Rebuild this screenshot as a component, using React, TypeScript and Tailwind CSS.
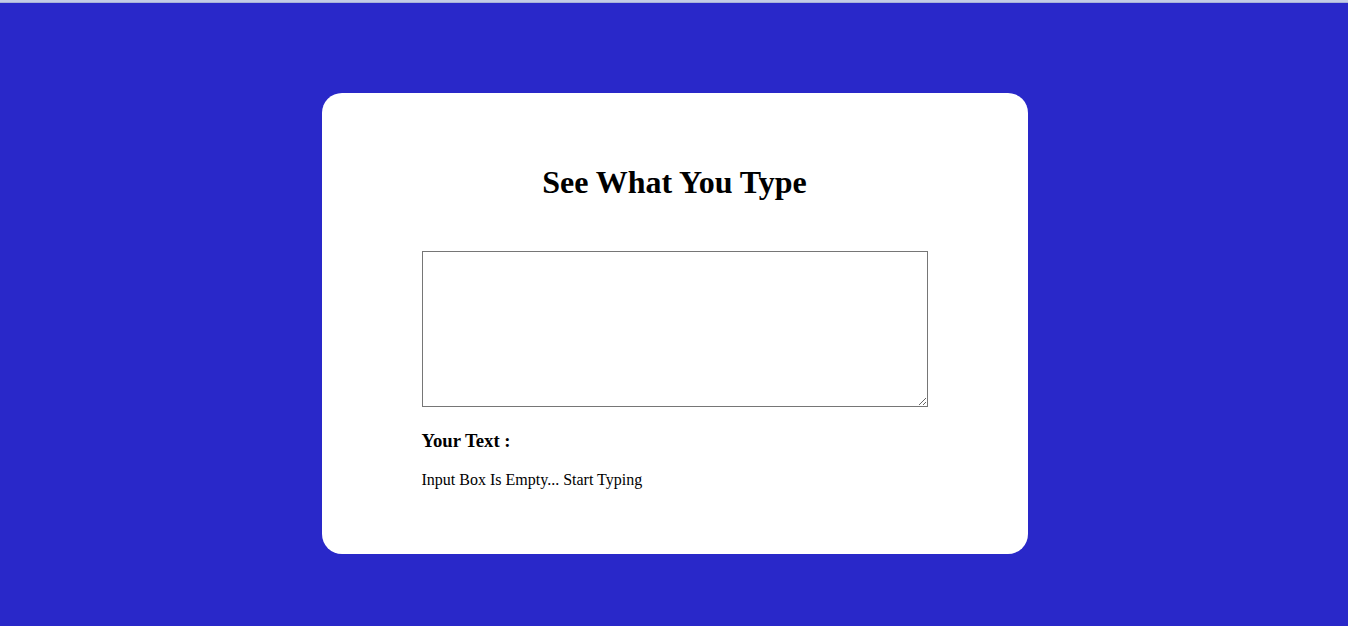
import React, { useState } from 'react';

export default function App() {
  const [text, setText] = useState('');

  return (
    <div className="min-h-screen w-full bg-[#2928c9] font-['Liberation_Serif','Times_New_Roman',serif] text-black">
      <div className="h-[3px] w-full bg-[#c4cce6] border-b border-[#a8b2d8]" />
      <div className="flex justify-center pt-[90px] pb-[72px] pl-[1px]">
        <div className="w-[706px] rounded-[20px] bg-white px-[100px] py-[50px]">
          <h1 className="my-[21.44px] text-center text-[32px] font-bold leading-[36.8px]">See What You Type</h1>
          <div className="pt-[28px]">
            <textarea
              value={text}
              onChange={(e) => setText(e.target.value)}
              className="block h-[156px] w-[506px] resize-y border border-[#767676] bg-white p-[2px] text-[13px] outline-none"
            />
          </div>
          <h3 className="mt-[23px] text-[18.72px] font-bold leading-[21.5px]">Your Text :</h3>
          <p className="mt-[19.5px] mb-[14.5px] text-[16px] leading-[18.4px]">
            {text.length ? text : 'Input Box Is Empty... Start Typing'}
          </p>
        </div>
      </div>
    </div>
  );
}
